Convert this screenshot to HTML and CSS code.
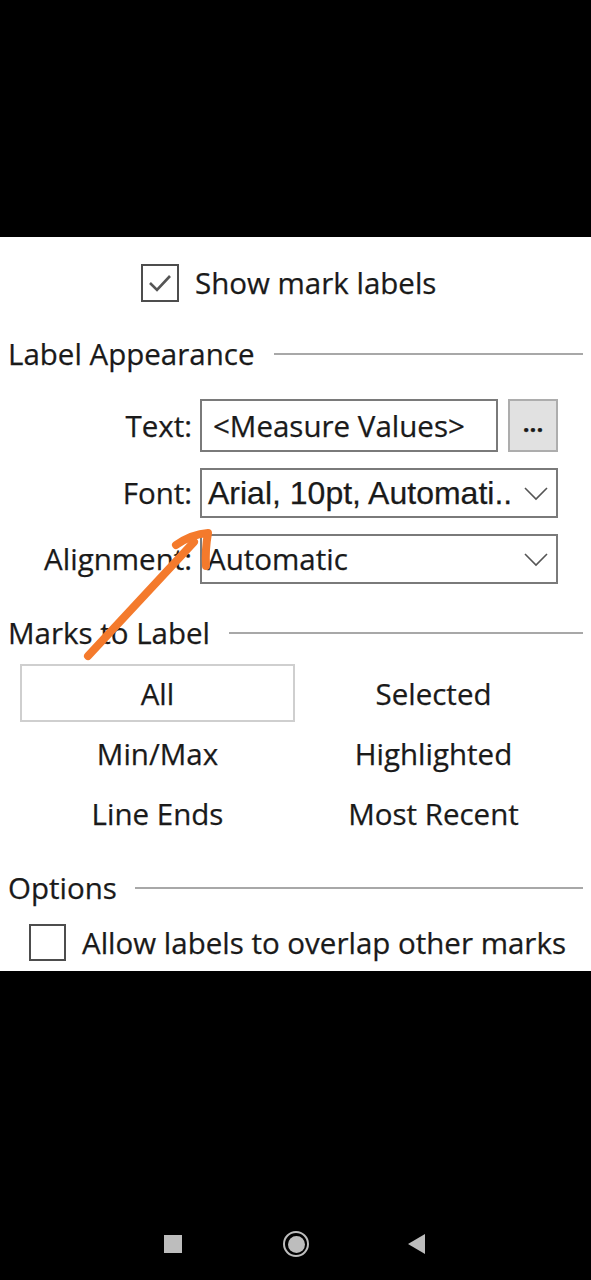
FILE: index.html
```html
<!DOCTYPE html>
<html lang="en">
<head>
<meta charset="utf-8">
<title>Mark labels</title>
<link rel="stylesheet" href="styles.css">
</head>
<body>
<div class="screen">
  <div class="black-top"></div>
  <div class="panel">
    <div class="check-row top-check">
      <span class="box"><svg viewBox="0 0 38 38" width="38" height="38"><polyline points="9,19 16,26 29,12" fill="none" stroke="#555" stroke-width="2.6"/></svg></span>
      <span>Show mark labels</span>
    </div>

    <div class="section-head head-appearance"><span>Label Appearance</span><span class="rule"></span></div>

    <div class="form">
      <div class="form-label">Text:</div>
      <div class="field-pair">
        <div class="input">&lt;Measure Values&gt;</div>
        <div class="btn-dots">...</div>
      </div>
      <div class="form-label">Font:</div>
      <div class="select arial">
        <span>Arial, 10pt, Automati..</span>
        <svg viewBox="0 0 24 14" width="24" height="14"><polyline points="1,1 12,12 23,1" fill="none" stroke="#555" stroke-width="1.6"/></svg>
      </div>
      <div class="form-label">Alignment:</div>
      <div class="select">
        <span>Automatic</span>
        <svg viewBox="0 0 24 14" width="24" height="14"><polyline points="1,1 12,12 23,1" fill="none" stroke="#555" stroke-width="1.6"/></svg>
      </div>
    </div>

    <div class="section-head head-marks"><span>Marks to Label</span><span class="rule"></span></div>

    <div class="marks-grid">
      <div class="mark-opt active">All</div>
      <div class="mark-opt">Selected</div>
      <div class="mark-opt">Min/Max</div>
      <div class="mark-opt">Highlighted</div>
      <div class="mark-opt">Line Ends</div>
      <div class="mark-opt">Most Recent</div>
    </div>

    <div class="section-head head-options"><span>Options</span><span class="rule"></span></div>

    <div class="check-row bottom-check">
      <span class="box"></span>
      <span>Allow labels to overlap other marks</span>
    </div>
  </div>
  <div class="black-bottom">
    <div class="navbar">
      <span class="nav-square"></span>
      <span class="nav-home"><span class="nav-home-dot"></span></span>
      <svg class="nav-back" viewBox="0 0 17 20" width="17" height="20"><polygon points="17,0 17,20 0,10" fill="#bdbdbd"/></svg>
    </div>
  </div>
  <svg class="arrow" viewBox="0 0 591 1280" width="591" height="1280">
    <path d="M88 656 L194 542" fill="none" stroke="#f47a2c" stroke-width="8" stroke-linecap="round"/>
    <path d="M176 545 Q192 534 208 533 Q205 550 206 566" fill="none" stroke="#f47a2c" stroke-width="8" stroke-linecap="round" stroke-linejoin="round"/>
  </svg>
</div>
</body>
</html>
```

FILE: styles.css
```css
* { box-sizing: border-box; }
html, body { margin: 0; padding: 0; background: #000; }
body { font-family: "Open Sans", "DejaVu Sans", sans-serif; color: #1a1a1a; }

.screen { position: relative; width: 591px; height: 1280px; background: #000; overflow: hidden; }
.black-top { height: 237px; background: #000; }

.panel {
  height: 734px;
  background: #fff;
  padding: 0 8px;
  display: flex;
  flex-direction: column;
  font-size: 29.5px;
  -webkit-text-stroke: 0.25px #1a1a1a;
}

.check-row { display: flex; align-items: center; gap: 16px; line-height: 38px; }
.box {
  width: 38px; height: 38px;
  border: 2px solid #4d4d4d;
  background: #fff;
  display: block;
  flex: none;
}
.box svg { display: block; margin: -2px 0 0 -2px; }
.top-check { margin-top: 27px; padding-left: 133px; height: 38px; }
.bottom-check { margin-top: 16px; padding-left: 21px; height: 37px; }
.bottom-check .box { width: 37px; height: 37px; }

.section-head { display: flex; align-items: center; gap: 20px; height: 40px; line-height: 40px; }
.section-head .rule { flex: 1; height: 2px; background: #a8a8a8; }
.head-appearance { margin-top: 32px; }
.head-marks { margin-top: 29px; gap: 19px; }
.head-options { margin-top: 26px; gap: 18px; }

.form {
  margin-top: 25px;
  display: grid;
  grid-template-columns: 184px 358px;
  grid-template-rows: 53px 50px 50px;
  column-gap: 8px;
  row-gap: 16px;
}
.form-label { text-align: right; align-self: center; line-height: 40px; white-space: nowrap; }
.field-pair { display: flex; gap: 10px; }
.input {
  flex: 1;
  border: 2px solid #7a7a7a;
  padding: 0 11px;
  line-height: 49px;
  white-space: nowrap;
}
.btn-dots {
  width: 50px;
  background: #e1e1e1;
  border: 2px solid #adadad;
  text-align: center;
  line-height: 44px;
  font-weight: 700;
  font-size: 24px;
}
.select {
  border: 2px solid #7a7a7a;
  display: flex;
  align-items: center;
  justify-content: space-between;
  padding: 0 8px 0 5px;
  white-space: nowrap;
  line-height: 46px;
}
.select.arial { font-family: "Liberation Sans", Arial, sans-serif; font-size: 32px; padding-left: 6px; }
.select svg { flex: none; margin-top: 2px; }

.marks-grid {
  margin-top: 11px;
  padding-left: 12px;
  display: grid;
  grid-template-columns: 275px 275px;
  grid-template-rows: 58px 58px 58px;
  column-gap: 1px;
  row-gap: 2px;
}
.mark-opt { display: flex; align-items: center; justify-content: center; }
.mark-opt.active { border: 2px solid #cfcfcf; }

.black-bottom { height: 309px; background: #000; position: relative; }
.navbar {
  position: absolute; left: 0; right: 0; top: 263px;
  height: 20px;
  display: flex; align-items: center;
}
.nav-square { position: absolute; left: 164px; top: 1px; width: 18px; height: 18px; background: #bdbdbd; }
.nav-home {
  position: absolute; left: 283px; top: -3px;
  width: 26px; height: 26px; border-radius: 50%;
  border: 2px solid #bdbdbd;
  display: flex; align-items: center; justify-content: center;
}
.nav-home-dot { width: 17px; height: 17px; border-radius: 50%; background: #bdbdbd; }
.nav-back { position: absolute; left: 408px; top: 0; }

.arrow { position: absolute; left: 0; top: 0; pointer-events: none; }
```
